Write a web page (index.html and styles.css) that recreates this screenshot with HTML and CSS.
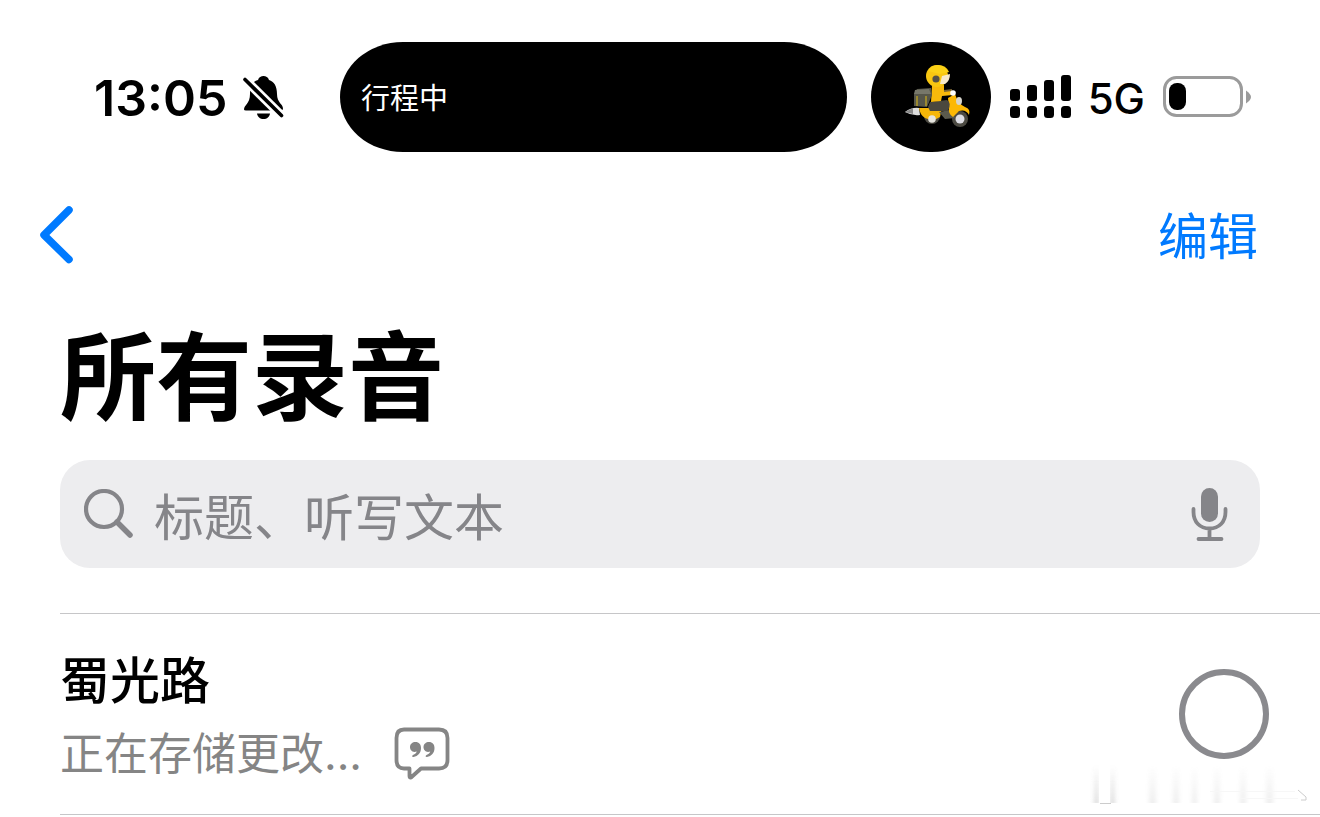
FILE: index.html
```html
<!DOCTYPE html>
<html lang="zh-CN">
<head>
<meta charset="utf-8">
<meta name="viewport" content="width=device-width, initial-scale=1">
<title>所有录音</title>
<link rel="stylesheet" href="styles.css">
</head>
<body>
<header class="status">
  <div class="clock">
    <time class="time">13:05</time>
    <svg class="bell" width="42" height="46" viewBox="0 0 42 46" aria-label="静音">
      <path d="M1 33.500C1 29 7 28 7 18C7 9 10 5.500 15 4C16 1 18 0 20.500 0C23 0 25 1 26 4C31 5.500 34 10 34 18C34 27 40 28 40 32.500Q40 34.500 38 34.500H3Q1 34.500 1 33.500Z"/>
      <path d="M14 37.500H27C26.500 41 24 43 20.500 43S14.500 41 14 37.500Z"/>
      <path d="M2 3.500L40 41" fill="none" stroke="#fff" stroke-width="9"/>
      <path d="M2 3.500L38.500 39.500" fill="none" stroke="#000" stroke-width="3.600" stroke-linecap="round"/>
    </svg>
  </div>
  <div class="island">行程中</div>
  <div class="bubble">
    <svg class="rider" width="76" height="72" viewBox="0 0 76 72" aria-label="外卖骑手">
      <path d="M6 54Q13 49 20 50L21 57Q13 58 6 54Z" fill="#ddd"/>
      <path d="M6 54L14 50V56Z" fill="#888"/>
      <circle cx="33" cy="58" r="8" fill="#4c4a42"/>
      <circle cx="61" cy="61" r="8" fill="#4c4a42"/>
      <path d="M20 50H43L41 59Q34 64 26 60Q21 57 20 50Z" fill="#f5b609"/>
      <path d="M40 54L51 52 56 60 46 61Z" fill="#5b5a4d"/>
      <path d="M49 40L56 36Q59 46 66 49Q72 51 70 57Q67 51 60 53L54 59Q49 56 50 50Z" fill="#fcb805"/>
      <path d="M31 44L48 42Q53 45 49 53H31L29 49Z" fill="#4b483e"/>
      <path d="M33 28L45 27 45 32 54 33 54 37 43 38 42 43 32 44Z" fill="#f8b90b"/>
      <path d="M18 31L32 30 33 37 28 49 15 48 15 36Z" fill="#56564a"/>
      <path d="M16 32L30 31 32 36H15Z" fill="#77776a"/>
      <path d="M18 38V48M27 38V48" stroke="#b29a27" stroke-width="1.500"/>
      <circle cx="38" cy="18" r="11" fill="#f8c611"/>
      <path d="M43 18L51 16Q51 23 46 26L41 26Z" fill="#f7e9c9"/>
      <path d="M29 13Q32 7 39 7Q47 7 50 14L41 16Z" fill="#fbd116"/>
      <circle cx="37" cy="21" r="3.600" fill="#555145"/>
      <path d="M45 33L53 32" stroke="#776333" stroke-width="2"/>
      <circle cx="54" cy="35" r="2.800" fill="#fff"/>
      <ellipse cx="60" cy="43" rx="3" ry="4" fill="#d7d5cd"/>
      <circle cx="33" cy="61" r="3.800" fill="#e6e5df"/>
      <circle cx="61" cy="61" r="4.500" fill="#dedee4"/>
    </svg>
  </div>
  <div class="indicators">
    <svg class="signal" width="62" height="44" viewBox="0 0 62 44" aria-label="信号">
      <rect x="0" y="14" width="10" height="12" rx="3"/><rect x="17" y="10" width="10" height="16" rx="3"/><rect x="34" y="5" width="10" height="21" rx="3"/><rect x="51" y="0" width="10" height="26" rx="3"/>
      <rect x="0" y="31" width="10" height="12" rx="3.500"/><rect x="17" y="31" width="10" height="12" rx="3.500"/><rect x="34" y="31" width="10" height="12" rx="3.500"/><rect x="51" y="31" width="10" height="12" rx="3.500"/>
    </svg>
    <span class="network">5G</span>
    <svg class="battery" width="89" height="42" viewBox="0 0 89 42" aria-label="电池电量">
      <rect x="1.500" y="1.500" width="77" height="38" rx="12" fill="none" stroke="#9b9b9b" stroke-width="3"/>
      <rect x="6" y="7" width="17" height="27" rx="8"/>
      <path d="M83 14.500Q88 18 88 21T83 27.500Z" fill="#9b9b9b"/>
    </svg>
  </div>
</header>
<nav class="nav">
  <button class="back" type="button" aria-label="返回">
    <svg width="36" height="60" viewBox="0 0 36 60"><path d="M31 5L6 30L31 54.500" fill="none" stroke="#007aff" stroke-width="7.500" stroke-linecap="round" stroke-linejoin="round"/></svg>
  </button>
  <button class="edit" type="button">编辑</button>
</nav>
<main>
  <h1 class="title">所有录音</h1>
  <div class="search">
    <svg width="50" height="50" viewBox="0 0 50 50" aria-hidden="true"><g fill="none" stroke="#858589"><circle cx="20" cy="20" r="18" stroke-width="4.200"/><path d="M33 33L46 46" stroke-width="5.500" stroke-linecap="round"/></g></svg>
    <input class="field" type="text" aria-label="搜索" placeholder="标题、听写文本">
    <button class="mic" type="button" aria-label="语音输入">
      <svg width="38" height="56" viewBox="0 0 38 56"><rect x="11" y="2" width="17" height="34" rx="8.500" fill="#858589"/><path d="M3.500 23V26C3.500 36 10 42.500 19.500 42.500S35.500 36 35.500 26V23M19.500 42.500V53M8.500 53H31.500" fill="none" stroke="#858589" stroke-width="3.800" stroke-linecap="round"/></svg>
    </button>
  </div>
  <ul class="list">
    <li class="row">
      <div class="info">
        <h2 class="name">蜀光路</h2>
        <p class="state">正在存储更改...
          <svg width="56" height="54" viewBox="0 0 56 54" aria-label="转写"><path d="M10 2.500H45Q53.500 2.500 53.500 11V33Q53.500 41.500 45 41.500H27L17 50.500Q15.500 51 15.500 49V41.500H10Q2.500 41.500 2.500 33V11Q2.500 2.500 10 2.500Z" fill="none" stroke="#858585" stroke-width="3.800" stroke-linejoin="round"/><path id="q" d="M21.500 15C25 15 27 17.500 27 21C27 26 24 29 19.500 30C18 30.200 17.500 28.800 19 28C21 27 22.500 26 22.700 24.500C18.500 26 16 23 16 20C16 17 18.500 15 21.500 15Z" fill="#858585"/><use href="#q" x="13.500"/></svg>
        </p>
      </div>
      <input class="ring" type="checkbox" aria-label="选择 蜀光路">
      <svg class="smudge" width="220" height="46" viewBox="0 0 220 46" aria-hidden="true">
        <defs>
          <linearGradient id="fade" x1="0" y1="0" x2="0" y2="1"><stop offset="0" stop-color="#777" stop-opacity="0"/><stop offset="1" stop-color="#777" stop-opacity=".24"/></linearGradient>
          <filter id="soft" x="-100%" width="300%"><feGaussianBlur stdDeviation="2 0"/></filter>
        </defs>
        <g fill="url(#fade)"><g filter="url(#soft)"><rect x="4" y="2" width="5" height="38"/><rect x="20" y="2" width="5" height="38"/></g>
        <g filter="url(#soft)" opacity=".5"><rect x="59" y="2" width="7" height="38"/><rect x="83" y="2" width="6" height="38"/><rect x="102" y="2" width="5" height="38"/><rect x="124" y="2" width="6" height="38"/><rect x="150" y="2" width="6" height="38"/><rect x="176" y="2" width="7" height="38"/></g></g>
        <rect x="9" y="3" width="11" height="38" fill="#fff"/>
        <path d="M10 40.500H21" stroke="#ccc"/>
        <path d="M120 28.500H205M150 35.500H208" stroke="#f7f7f7"/>
        <path d="M208 27L216 34V37H211" fill="none" stroke="#ccc"/>
      </svg>
    </li>
  </ul>
</main>
</body>
</html>
```
FILE: styles.css
```css
* { box-sizing: border-box; }
body {
  margin: 0;
  background: #fff;
  color: #000;
  font-family: Inter, "Noto Sans CJK SC", sans-serif;
}
svg { display: block; flex: none; }
button { border: 0; padding: 0; background: none; font: inherit; cursor: pointer; }
h1, h2, p, ul { margin: 0; padding: 0; }

.status {
  display: flex;
  align-items: center;
  gap: 24px;
  padding: 42px 68px 0 94px;
}
.clock { display: flex; align-items: center; gap: 16px; width: 222px; }
.time { padding-top: 2px; font-size: 50px; font-weight: 600; line-height: 60px; }
.bell { margin-top: 4px; }
.island {
  flex: 1;
  height: 110px;
  padding-left: 21px;
  border-radius: 64px / 56px;
  background: #000;
  color: #fff;
  font-size: 29px;
  line-height: 114px;
}
.bubble {
  display: flex;
  flex: none;
  align-items: center;
  justify-content: center;
  width: 120px;
  height: 110px;
  padding: 0 0 6px 12px;
  border-radius: 60px / 56px;
  background: #000;
}
.indicators { display: flex; align-items: center; gap: 16px; margin-left: -5px; }
.network { padding-top: 4px; font-size: 42px; font-weight: 500; line-height: 50px; }
.battery { margin-left: 2px; }

.nav {
  display: flex;
  align-items: center;
  justify-content: space-between;
  height: 96px;
  margin-top: 35px;
  padding: 0 62px 0 38px;
}
.edit { padding-top: 4px; color: #007aff; font-size: 50px; line-height: 72px; }

.title {
  margin: 34px 60px 23px;
  font-size: 96px;
  font-weight: 700;
  line-height: 120px;
}
.search {
  display: flex;
  align-items: center;
  gap: 20px;
  height: 108px;
  margin: 0 60px;
  padding: 0 32px 0 24px;
  border-radius: 30px;
  background: #ededef;
}
.field {
  flex: 1;
  min-width: 0;
  height: 80px;
  padding: 0;
  border: 0;
  outline: 0;
  background: none;
  color: #000;
  font: 50px "Noto Sans CJK SC", sans-serif;
}
.field::placeholder { color: #858589; opacity: 1; }

.list { margin: 45px 0 0 60px; border-top: 1px solid #c6c6c8; list-style: none; }
.row {
  position: relative;
  display: flex;
  align-items: center;
  justify-content: space-between;
  padding: 37px 51px 33px 0;
  border-bottom: 1px solid #c6c6c8;
}
.name { font-size: 50px; font-weight: 500; line-height: 60px; }
.state {
  display: flex;
  align-items: center;
  gap: 32px;
  margin-top: 16px;
  color: #858585;
  font-size: 44px;
  line-height: 54px;
}
.ring {
  flex: none;
  width: 90px;
  height: 90px;
  margin: 0 0 4px;
  border: 6px solid #8a8a8e;
  border-radius: 50%;
  appearance: none;
}
.smudge { position: absolute; right: 10px; bottom: 5px; pointer-events: none; }
```
